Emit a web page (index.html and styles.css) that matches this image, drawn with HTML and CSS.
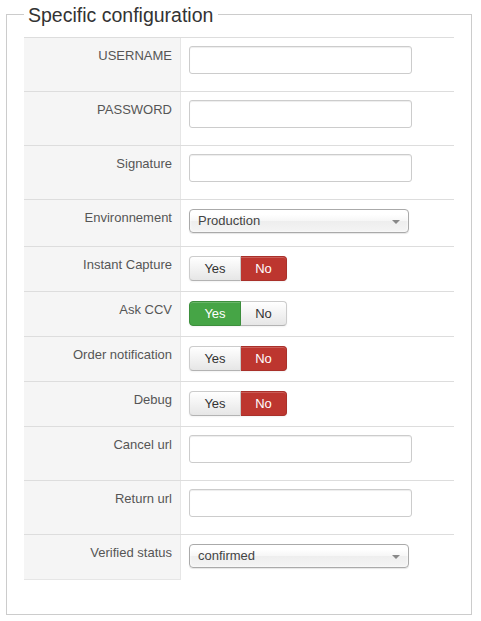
FILE: index.html
```html
<!DOCTYPE html>
<html lang="en">
<head>
<meta charset="utf-8">
<title>Specific configuration</title>
<link rel="stylesheet" href="styles.css">
</head>
<body>
<fieldset class="config">
  <legend class="config-title">Specific configuration</legend>
  <div class="table">
    <div class="row row-input">
      <div class="label">USERNAME</div>
      <div class="value"><input class="text-input" type="text"></div>
    </div>
    <div class="row row-input">
      <div class="label">PASSWORD</div>
      <div class="value"><input class="text-input" type="password"></div>
    </div>
    <div class="row row-input">
      <div class="label">Signature</div>
      <div class="value"><input class="text-input" type="text"></div>
    </div>
    <div class="row row-select">
      <div class="label">Environnement</div>
      <div class="value">
        <div class="chosen"><span class="chosen-text">Production</span><span class="chosen-arrow"></span></div>
      </div>
    </div>
    <div class="row row-toggle">
      <div class="label">Instant Capture</div>
      <div class="value">
        <div class="btn-group"><span class="btn btn-yes">Yes</span><span class="btn btn-no active-no">No</span></div>
      </div>
    </div>
    <div class="row row-toggle">
      <div class="label">Ask CCV</div>
      <div class="value">
        <div class="btn-group"><span class="btn btn-yes active-yes">Yes</span><span class="btn btn-no">No</span></div>
      </div>
    </div>
    <div class="row row-toggle">
      <div class="label">Order notification</div>
      <div class="value">
        <div class="btn-group"><span class="btn btn-yes">Yes</span><span class="btn btn-no active-no">No</span></div>
      </div>
    </div>
    <div class="row row-toggle">
      <div class="label">Debug</div>
      <div class="value">
        <div class="btn-group"><span class="btn btn-yes">Yes</span><span class="btn btn-no active-no">No</span></div>
      </div>
    </div>
    <div class="row row-input">
      <div class="label">Cancel url</div>
      <div class="value"><input class="text-input" type="text"></div>
    </div>
    <div class="row row-input">
      <div class="label">Return url</div>
      <div class="value"><input class="text-input" type="text"></div>
    </div>
    <div class="row row-select row-last">
      <div class="label">Verified status</div>
      <div class="value">
        <div class="chosen"><span class="chosen-text">confirmed</span><span class="chosen-arrow"></span></div>
      </div>
    </div>
  </div>
</fieldset>
</body>
</html>
```
FILE: styles.css
```css
html, body {
  margin: 0;
  padding: 0;
  background: #fff;
}

body {
  font-family: "Liberation Sans", Arial, Helvetica, sans-serif;
  font-size: 13px;
  line-height: 18px;
  color: #333;
}

.config {
  margin: 0 9px 0 6px;
  padding: 8px 17px 34px 17px;
  border: 1px solid #ccc;
  min-width: 0;
}

.config-title {
  margin: 0;
  padding: 2px 5px 0 4px;
  font-size: 19.5px;
  line-height: 27px;
  color: #333;
  font-weight: normal;
}

.table {
  display: flex;
  flex-direction: column;
}

.row {
  display: grid;
  grid-template-columns: 157px 1fr;
  border-top: 1px solid #ddd;
}

.label {
  background: #f5f5f5;
  border-right: 1px solid #e6e6e6;
  text-align: right;
  padding: 9px 8px 0 0;
  color: #555;
}

.row-last .label {
  border-bottom: 1px solid #e6e6e6;
}

.value {
  padding: 8px 8px;
}

.row-select .value {
  padding: 9px 8px 13px;
}

.row-last .value {
  padding: 9px 8px 12px;
}

.row-toggle .value {
  padding: 9px 8px 10px;
}

.text-input {
  display: block;
  box-sizing: border-box;
  width: 223px;
  height: 28px;
  margin: 0 0 9px 0;
  padding: 4px 6px;
  border: 1px solid #ccc;
  border-radius: 3px;
  background: #fff;
  box-shadow: inset 0 1px 1px rgba(0, 0, 0, 0.075);
  font: inherit;
}

.chosen {
  box-sizing: border-box;
  width: 220px;
  height: 24px;
  display: flex;
  align-items: center;
  justify-content: space-between;
  padding: 0 8px 0 8px;
  border: 1px solid #aaa;
  border-radius: 4px;
  background: linear-gradient(#fff 20%, #f6f6f6 50%, #eee 52%, #f4f4f4 100%);
  box-shadow: inset 0 0 3px #fff, 0 1px 1px rgba(0, 0, 0, 0.1);
  color: #444;
  line-height: 22px;
}

.chosen-arrow {
  width: 0;
  height: 0;
  border-left: 4px solid transparent;
  border-right: 4px solid transparent;
  border-top: 4px solid #888;
  margin-top: 1px;
}

.btn-group {
  display: flex;
}

.btn {
  box-sizing: border-box;
  height: 25px;
  line-height: 23px;
  text-align: center;
  color: #333;
  border: 1px solid #ccc;
  border-bottom-color: #b3b3b3;
  background: linear-gradient(#fff, #e6e6e6);
  box-shadow: inset 0 1px 0 rgba(255, 255, 255, 0.2), 0 1px 2px rgba(0, 0, 0, 0.05);
}

.btn-yes {
  width: 52px;
  border-radius: 4px 0 0 4px;
}

.btn-no {
  width: 46px;
  border-left: 0;
  border-radius: 0 4px 4px 0;
}

.active-no {
  background: #bd362f;
  border-color: #a9302a;
  color: #fff;
}

.active-yes {
  background: #46a546;
  border-color: #3d8f3d;
  color: #fff;
}
```
